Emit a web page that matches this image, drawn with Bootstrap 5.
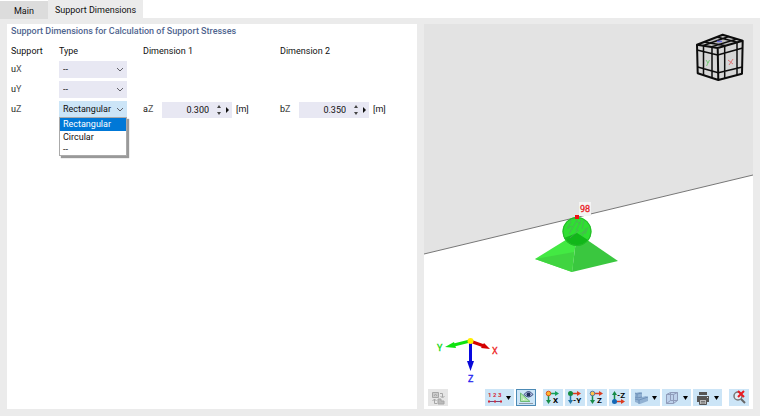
<!DOCTYPE html>
<html lang="en">
<head>
<meta charset="utf-8">
<meta name="viewport" content="width=device-width, initial-scale=1">
<title>Support Dimensions</title>
<link href="https://cdn.jsdelivr.net/npm/bootstrap@5.3.0/dist/css/bootstrap.min.css" rel="stylesheet">
<style>
body{background:#ebebeb;color:#101010;font-family:Roboto,"Open Sans",sans-serif;font-size:9px;line-height:12px}
.tab-strip{background:#fff;height:18px}
.tab-strip .nav-link{color:#101010;border-radius:0;padding:4px 7px 2px;background:#ebebeb}
.tab-strip .side-tab{background:#dcdcdc;padding:4px 14px 2px;margin-top:1px}
.work-area{display:grid;grid-template-columns:minmax(0,410fr) minmax(0,329fr);padding:6px 7px 7px;gap:7px}
.form-pane{padding:1px 4px}
.pane-title{font-size:9px;line-height:12px;color:#50658f;font-weight:500;margin:0 0 8px}
.field-grid{display:grid;grid-template-columns:48px 84px 137px 1fr;row-gap:3px;align-items:center}
.field-grid>*{min-height:17px;line-height:17px}
.field-grid>.head-cell{min-height:13px;line-height:13px}
.axis{color:#555}
.form-select.type-box{width:68px;height:17px;padding:0 11px 0 4px;border:0;border-radius:0;color:#101010;font-size:9px;line-height:17px;background:#e8e8f3 url("data:image/svg+xml,%3Csvg xmlns='http://www.w3.org/2000/svg' viewBox='0 0 8 6'%3E%3Cpath d='M1 1l3 3 3-3' fill='none' stroke='%23606068'/%3E%3C/svg%3E") no-repeat right 3px center/8px 6px}
.form-select.open-box{background-color:#cce5f7}
.type-list{left:0;top:16px;width:68px;z-index:5;background:#fff;border:1px solid #aaa;box-shadow:2px 2px 1px #999}
.type-list li{padding:0 3px;height:12px;line-height:12px}
.type-list .picked{background:#0078d7;color:#fff;height:13px}
.dim-label{width:19px}
.num-box{width:70px;height:16px;background:#e8e8f3;margin-right:4px}
.num-box input{width:47px;border:0;background:none;padding:0;text-align:right;color:#101010;font-size:9px;line-height:16px}
.num-box button{border:0;background:none;padding:0;display:flex}
.scene{inset:0}
.tools{left:4px;right:4px;bottom:3px;gap:7px}
.tool-set{gap:2px}
.tool{border:0;padding:0;height:17px;width:20px;background:#cce5f7;display:flex;align-items:center;justify-content:center}
.tool-wide{width:29px}
.tool-off{background:#e6e6e6}
.tool-on{border:1px solid #4c8ab5}
</style>
<script src="https://cdn.jsdelivr.net/npm/bootstrap@5.3.0/dist/js/bootstrap.bundle.min.js"></script>
</head>
<body>
<div class="d-flex flex-column min-vh-100">
<nav class="nav tab-strip" aria-label="Pages">
<a class="nav-link side-tab" href="#main">Main</a>
<a class="nav-link" href="#support" aria-current="page">Support Dimensions</a>
</nav>
<main class="work-area flex-grow-1">
<section class="form-pane bg-white">
<h1 class="pane-title">Support Dimensions for Calculation of Support Stresses</h1>
<form class="field-grid">
<div class="head-cell">Support</div><div class="head-cell">Type</div><div class="head-cell">Dimension 1</div><div class="head-cell">Dimension 2</div>
<label for="ux">u<span class="axis">X</span></label>
<div><select class="form-select type-box" id="ux"><option>--</option><option>Rectangular</option><option>Circular</option></select></div><div></div><div></div>
<label for="uy">u<span class="axis">Y</span></label>
<div><select class="form-select type-box" id="uy"><option>--</option><option>Rectangular</option><option>Circular</option></select></div><div></div><div></div>
<label for="uz">u<span class="axis">Z</span></label>
<div class="position-relative"><select class="form-select type-box open-box" id="uz"><option>Rectangular</option><option>Circular</option><option>--</option></select>
<ul class="type-list list-unstyled m-0 position-absolute"><li class="picked">Rectangular</li><li>Circular</li><li>--</li></ul></div>
<div class="d-flex align-items-center"><label class="dim-label" for="az">a<span class="axis">Z</span></label>
<div class="num-box d-flex align-items-center"><input id="az" type="text" value="0.300">
<div class="d-flex flex-column gap-1 ms-2"><button type="button" aria-label="Increase"><svg width="4" height="3"><path d="M0 3l2-3 2 3z" fill="#444"/></svg></button><button type="button" aria-label="Decrease"><svg width="4" height="3"><path d="M0 0l2 3 2-3z" fill="#444"/></svg></button></div>
<button class="ms-1" type="button" aria-label="More"><svg width="5" height="6"><path d="M1 0l3 3-3 3z" fill="#111"/></svg></button></div>[m]</div>
<div class="d-flex align-items-center"><label class="dim-label" for="bz">b<span class="axis">Z</span></label>
<div class="num-box d-flex align-items-center"><input id="bz" type="text" value="0.350">
<div class="d-flex flex-column gap-1 ms-2"><button type="button" aria-label="Increase"><svg width="4" height="3"><path d="M0 3l2-3 2 3z" fill="#444"/></svg></button><button type="button" aria-label="Decrease"><svg width="4" height="3"><path d="M0 0l2 3 2-3z" fill="#444"/></svg></button></div>
<button class="ms-1" type="button" aria-label="More"><svg width="5" height="6"><path d="M1 0l3 3-3 3z" fill="#111"/></svg></button></div>[m]</div>
</form>
</section>
<section class="bg-white position-relative overflow-hidden">
<svg class="scene position-absolute w-100 h-100" viewBox="424 24 329 385" preserveAspectRatio="xMidYMid slice" font-family="Roboto, sans-serif" role="img" aria-label="Support model">
<path d="M424 24H753V175L424 254z" fill="#e3e3e3"/>
<path d="M424 254L753 175" stroke="#777" fill="none"/>
<!-- support symbol -->
<path d="M535 259L577 233 572 272z" fill="#43e943"/><path d="M577 233L618 261 572 272z" fill="#3ac73f"/><path d="M535 259L574 252 572 272z" fill="#40d440"/>
<circle cx="577" cy="231.500" r="14.500" fill="#18dc1c" fill-opacity=".9"/>
<path d="M564 238L577 233 588 240A14 14 0 0 1 567 242z" fill="#0fae18" fill-opacity=".8"/>
<g fill="none" stroke="#5c9a68" stroke-width="1" opacity=".6"><path d="M567 229l4-7m-2 12l8-14m-1 11l5-11m1 9l2-9m1 14l3-7m-18 11l9-8m3 6l4-8m-16-7l6-4"/><path d="M576 221l5 3m-13 4l4-2m8 8l5-3"/></g>
<circle cx="577" cy="231.500" r="14" fill="none" stroke="#25b82a"/>
<rect x="579" y="202" width="12" height="14" fill="#f4f4f4"/><rect x="575" y="215" width="4" height="4" fill="#f01010"/>
<text x="580" y="212" font-size="9" fill="#e81c24" stroke="#e81c24" stroke-width=".3">98</text>
<!-- view cube -->
<path d="M697 45L723 35 743 41 742 74 718 80 698 73z" fill="#d6d6d6"/>
<path d="M697 45L723 35 743 41 718 47z" fill="#bdbdbd"/>
<g fill="none" stroke="#0c0c0c" stroke-width="2" stroke-linejoin="round"><path d="M697 44.700L722.700 34.700 742.700 40.700 717.700 48zM697 44.700L697.700 73.300 718.300 80 717.700 48M718.300 80L742 73.700 742.700 40.700"/><path d="M697 50L717.700 55 742.700 48M697.700 67L718.300 72.700 742.300 67M703.500 46V75M712 47V78M724.700 46V78M737 43V75M703.500 45.500L728.700 36.500M712 46.600L737 39M724.700 45.500L704 42M737 42.200L717 37" stroke-width="1.500"/></g>
<path d="M717 41.500h5" stroke="#6666dc" stroke-width="1.500"/><path d="M706 60l2 3m1.500-3l-3 6" stroke="#76c978" fill="none"/><path d="M728 60l5 4m0-5l-4 6" stroke="#e07676" fill="none"/>
<!-- axes -->
<g stroke-width="3"><path d="M470 341L454 345" stroke="#0fe30f"/><path d="M470 341L484 346" stroke="#d40000"/><path d="M470.500 341V362" stroke="#0808e0"/></g>
<path d="M445 347L454 342 456 348z" fill="#0fe30f"/><path d="M490 349L484 343 481 348z" fill="#d40000"/><path d="M467 361H474L470.500 371z" fill="#0808d8"/><circle cx="470.500" cy="341" r="3" fill="#ffee00"/>
<g font-size="9" stroke-width=".3"><text x="437" y="351" fill="#10d810" stroke="#10d810">Y</text><text x="492" y="354" fill="#ed2020" stroke="#ed2020">X</text><text x="468" y="382" fill="#2828f0" stroke="#2828f0">Z</text></g>
</svg>
<div class="tools position-absolute d-flex" role="toolbar" aria-label="View tools">
<button class="tool tool-off me-auto" aria-label="Swap view"><svg width="14" height="14" fill="none" stroke="#a6a6a6"><path d="M1.500 1.500h6v5h-6z" fill="#ccc"/><path d="M3 5l1.500-2L6 5M9 2.500h2.500V6M9.500 5l2 2 2-2M3.500 12.500V8M1.500 10l2-2 2 2M3.500 12.500H6"/><path d="M7 8h3v2h3v3H7z" fill="#bbb"/></svg></button>
<div class="d-flex tool-set">
<button class="tool tool-wide justify-content-evenly" aria-label="Numbering"><svg width="14" height="14" font-size="6" font-weight="700" fill="#d42838"><text x="0" y="6">1</text><text x="5" y="6">2</text><text x="10" y="6">3</text><path d="M1 10.500H13" stroke="#76467a"/><path d="M0 9.500h2v2H0zM6 9.500h2v2H6zM12 9.500h2v2h-2z"/></svg><svg width="5" height="4"><path d="M0 0h5L2.500 4z"/></svg></button>
<button class="tool tool-on" aria-label="Show results"><svg width="16" height="15"><path d="M2.500 3V11.500H12z" fill="#b5e6b0" stroke="#6dbb77"/><path d="M5 8v2h2z" fill="#e6f5ef"/><path d="M1 13.500H15" stroke="#8d9ba9"/><path d="M6 4.500q4.500-6 9 0q-4.500 5-9 0z" fill="#b8c4e6" stroke="#34487b"/><circle cx="10.500" cy="4.500" r="2" fill="#20305c"/></svg></button>
</div>
<div class="d-flex tool-set">
<button class="tool" aria-label="View X"><svg width="16" height="15"><path d="M3.500 4V11" stroke="#178c48" stroke-width="1.500"/><path d="M1 10h5L3.500 14z" fill="#178c48"/><path d="M4 3.500H11" stroke="#16a05c" stroke-width="1.500"/><path d="M10 1v5l4-2.500z" fill="#16a05c"/><circle cx="3.500" cy="3.500" r="2.300" fill="#ffb52e" stroke="#dc5420"/><text x="8" y="13" font-size="8" font-weight="700">X</text></svg></button>
<button class="tool" aria-label="View minus Y"><svg width="16" height="15"><path d="M3.500 4V11" stroke="#2374a9" stroke-width="1.500"/><path d="M1 10h5L3.500 14z" fill="#2374a9"/><path d="M4 3.500H11" stroke="#dc3c20" stroke-width="1.500"/><path d="M10 1v5l4-2.500z" fill="#dc3c20"/><circle cx="3.500" cy="3.500" r="2.500" fill="#148b3f"/><text x="6" y="13" font-size="8" font-weight="700">-Y</text></svg></button>
<button class="tool" aria-label="View Z"><svg width="16" height="15"><path d="M3.500 4V11" stroke="#178c48" stroke-width="1.500"/><path d="M1 10h5L3.500 14z" fill="#178c48"/><path d="M4 3.500H11" stroke="#dc3c20" stroke-width="1.500"/><path d="M10 1v5l4-2.500z" fill="#dc3c20"/><circle cx="3.500" cy="3.500" r="2.300" fill="#ffc34c" stroke="#5878a0"/><text x="8" y="13" font-size="8" font-weight="700">Z</text></svg></button>
<button class="tool" aria-label="View minus Z"><svg width="16" height="15"><path d="M3.500 11V4" stroke="#178c48" stroke-width="1.500"/><path d="M1 5h5L3.500 1z" fill="#178c48"/><path d="M4 11.500H11" stroke="#dc3c20" stroke-width="1.500"/><path d="M10 9v5l4-2.500z" fill="#dc3c20"/><circle cx="3.500" cy="11.500" r="2.500" fill="#1267b5"/><text x="6" y="8" font-size="8" font-weight="700">-Z</text></svg></button>
<button class="tool tool-wide justify-content-evenly" aria-label="Model display"><svg width="15" height="14"><path d="M1 2l5-1 2 1v4l4-1 2 1v4l-8 3-5-2z" fill="#91b1d2"/><path d="M1 2l2 1 5-1M3 3v4l-2-1M3 7l5-1M1 8l4 1 9-3M5 9v4" stroke="#6f92ba" fill="none"/></svg><svg width="5" height="4"><path d="M0 0h5L2.500 4z"/></svg></button>
<button class="tool tool-wide justify-content-evenly" aria-label="Wireframe"><svg width="14" height="14"><path d="M1.500 3.500l4-2h7v8l-4 3h-7z" fill="#bdd1eb"/><path d="M1.500 3.500l4-2h7v8l-4 3h-7zM1.500 3.500h7v9M8.500 3.500l4-2M5.500 1.500v8h7M1.500 12.500l4-3" fill="none" stroke="#8f9cba"/></svg><svg width="5" height="4"><path d="M0 0h5L2.500 4z"/></svg></button>
<button class="tool tool-wide justify-content-evenly" aria-label="Print"><svg width="14" height="14"><path d="M3 1h8v3H3zM1 5h12v6H1z" fill="#555"/><path d="M3.500 8.500h7v5h-7z" fill="#bbb" stroke="#555"/><path d="M5 10.500h4M5 12h4" stroke="#777"/><path d="M11 6h1v1h-1z" fill="#ddd"/></svg><svg width="5" height="4"><path d="M0 0h5L2.500 4z"/></svg></button>
</div>
<button class="tool" aria-label="Cancel zoom"><svg width="15" height="15"><circle cx="6" cy="6" r="4" fill="#e2edf5" stroke="#777" stroke-width="1.500"/><path d="M9 9l4 4" stroke="#666" stroke-width="2"/><path d="M6 1l6 6M12 1L6 7" stroke="#e81b23" stroke-width="2"/></svg></button>
</div>
</section>
</main>
</div>
</body>
</html>
